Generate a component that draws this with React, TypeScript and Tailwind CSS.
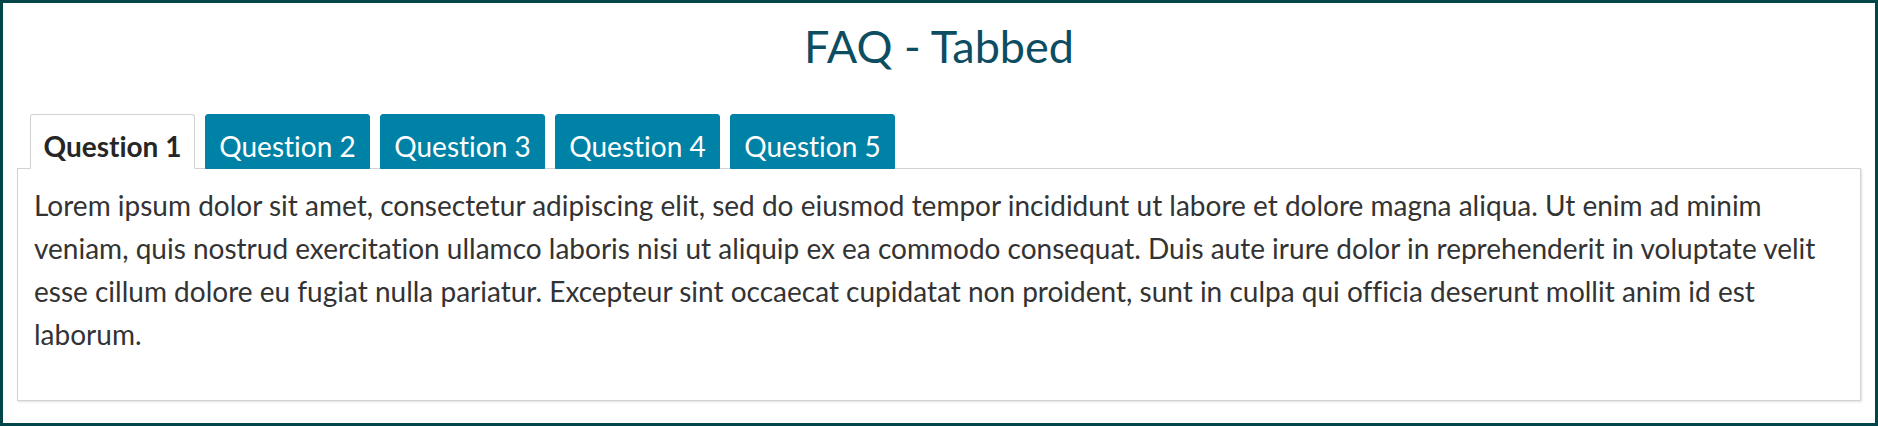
import React, { useState } from 'react';

const questions = [
  {
    id: 1,
    label: 'Question 1',
    answer:
      'Lorem ipsum dolor sit amet, consectetur adipiscing elit, sed do eiusmod tempor incididunt ut labore et dolore magna aliqua. Ut enim ad minim veniam, quis nostrud exercitation ullamco laboris nisi ut aliquip ex ea commodo consequat. Duis aute irure dolor in reprehenderit in voluptate velit esse cillum dolore eu fugiat nulla pariatur. Excepteur sint occaecat cupidatat non proident, sunt in culpa qui officia deserunt mollit anim id est laborum.',
  },
  { id: 2, label: 'Question 2', answer: 'Answer to question 2.' },
  { id: 3, label: 'Question 3', answer: 'Answer to question 3.' },
  { id: 4, label: 'Question 4', answer: 'Answer to question 4.' },
  { id: 5, label: 'Question 5', answer: 'Answer to question 5.' },
];

export default function App() {
  const [active, setActive] = useState(1);
  const current = questions.find((q) => q.id === active)!;

  return (
    <div className="h-[426px] w-full border-[3px] border-[#03464a] bg-white px-[14px] pt-[16px] pb-[22px] font-['Lato','Liberation_Sans',sans-serif] [font-variant-ligatures:none]">
      <h1 className="text-center text-[45px] leading-[54px] font-normal text-[#0d4d62]">FAQ - Tabbed</h1>

      <div className="mt-[41px] ml-[13px] flex gap-[10px]">
        {questions.map((q) => {
          const isActive = q.id === active;
          return (
            <button
              key={q.id}
              onClick={() => setActive(q.id)}
              className={`relative z-10 -mb-px h-[55px] w-[165px] rounded-t-[3px] border pt-[8px] text-center text-[28px] leading-[34px] ${
                isActive
                  ? 'border-[#d2d2d2] border-b-white bg-white font-bold text-[#262626]'
                  : 'border-[#0081a6] bg-[#0081a6] font-normal text-white'
              }`}
            >
              {q.label}
            </button>
          );
        })}
      </div>

      <div className="h-[233px] border border-[#d2d2d2] bg-white px-[16px] pt-[15px] pb-[43px] shadow-[1px_1px_2px_rgba(0,0,0,0.12)]">
        <p className="text-[28px] leading-[43px] text-[#333333]">{current.answer}</p>
      </div>
    </div>
  );
}
